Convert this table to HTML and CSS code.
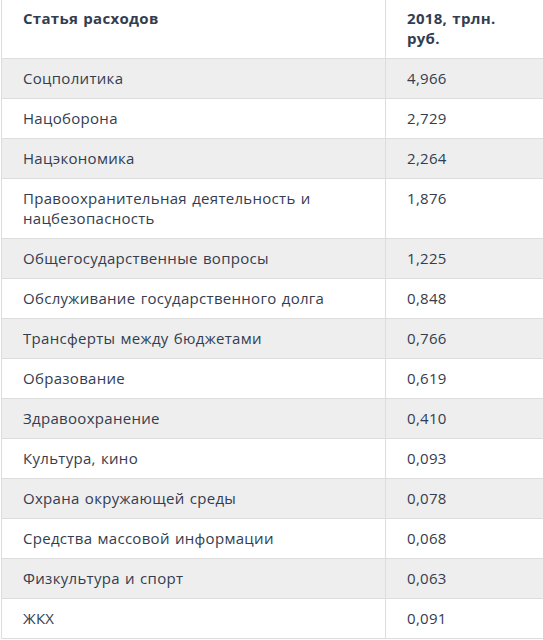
FILE: index.html
```html
<!DOCTYPE html>
<html lang="ru">
<head>
<meta charset="utf-8">
<link rel="stylesheet" href="styles.css">
</head>
<body>
<div class="wrap">
<table class="tbl">
  <thead>
    <tr><th class="c1">Статья расходов</th><th class="c2">2018, трлн. руб.</th></tr>
  </thead>
  <tbody>
    <tr><td class="c1">Соцполитика</td><td class="c2">4,966</td></tr>
    <tr><td class="c1">Нацоборона</td><td class="c2">2,729</td></tr>
    <tr><td class="c1">Нацэкономика</td><td class="c2">2,264</td></tr>
    <tr><td class="c1">Правоохранительная деятельность и нацбезопасность</td><td class="c2">1,876</td></tr>
    <tr><td class="c1">Общегосударственные вопросы</td><td class="c2">1,225</td></tr>
    <tr><td class="c1">Обслуживание государственного долга</td><td class="c2">0,848</td></tr>
    <tr><td class="c1">Трансферты между бюджетами</td><td class="c2">0,766</td></tr>
    <tr><td class="c1">Образование</td><td class="c2">0,619</td></tr>
    <tr><td class="c1">Здравоохранение</td><td class="c2">0,410</td></tr>
    <tr><td class="c1">Культура, кино</td><td class="c2">0,093</td></tr>
    <tr><td class="c1">Охрана окружающей среды</td><td class="c2">0,078</td></tr>
    <tr><td class="c1">Средства массовой информации</td><td class="c2">0,068</td></tr>
    <tr><td class="c1">Физкультура и спорт</td><td class="c2">0,063</td></tr>
    <tr><td class="c1">ЖКХ</td><td class="c2">0,091</td></tr>
  </tbody>
</table>
</div>
</body>
</html>
```
FILE: styles.css
```css
html, body {
  margin: 0;
  padding: 0;
  background: #ffffff;
  overflow: hidden;
}
.wrap {
  padding-left: 1px;
  width: 543px;
  overflow: hidden;
}
.tbl {
  border-collapse: collapse;
  table-layout: fixed;
  width: 560px;
  font-family: "Open Sans", "Noto Sans", sans-serif;
  font-size: 15px;
  letter-spacing: 0.3px;
  word-spacing: 1px;
  line-height: 20px;
  color: #333d4f;
}
.tbl th, .tbl td {
  text-align: left;
  vertical-align: top;
  border: 1px solid #dddddd;
  padding: 9px 22px 10px 21px;
}
.tbl thead th {
  border-top: none;
  padding-top: 8px;
  padding-bottom: 10px;
  font-weight: 700;
}
.tbl .c1 { width: 340px; }
.tbl .c2 { padding-right: 60px; }
.tbl tbody tr:nth-child(odd) { background: #eeeeee; }
```
